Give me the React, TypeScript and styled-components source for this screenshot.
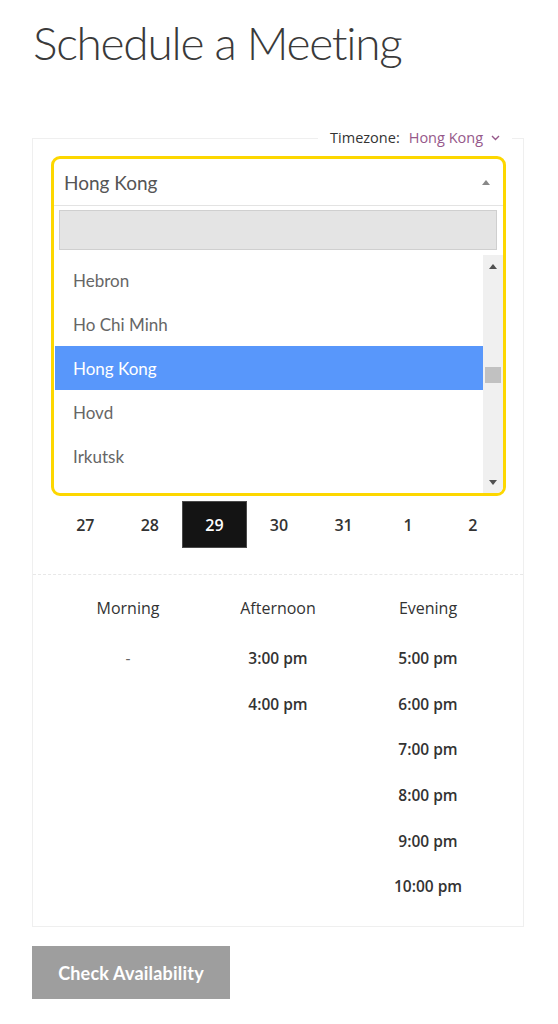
import styled, { createGlobalStyle } from 'styled-components';

const GlobalStyle = createGlobalStyle`
	body {
		margin: 0;
		background: #ffffff;
		font-family: 'Open Sans', 'Noto Sans', sans-serif;
		color: #333333;
	}
`;

const zones = ['Hebron', 'Ho Chi Minh', 'Hong Kong', 'Hovd', 'Irkutsk'];
const days = [27, 28, 29, 30, 31, 1, 2];
const slots = [
	{ title: 'Morning', times: [] as string[] },
	{ title: 'Afternoon', times: ['3:00 pm', '4:00 pm'] },
	{ title: 'Evening', times: ['5:00 pm', '6:00 pm', '7:00 pm', '8:00 pm', '9:00 pm', '10:00 pm'] },
];

const Page = styled.main`
	padding: 0 34px 30px 32px;
`;

const Title = styled.h1`
	margin: 0;
	padding: 14px 0 0 1px;
	font-family: Lato, 'Liberation Sans', sans-serif;
	font-weight: 300;
	font-size: 46px;
	line-height: 58px;
	letter-spacing: -1.25px;
	color: #3a3a3a;
`;

const Panel = styled.section`
	position: relative;
	margin-top: 66px;
	border: 1px solid #efefef;
`;

const TimezoneLabel = styled.div`
	position: absolute;
	top: -11px;
	right: 11px;
	display: flex;
	align-items: center;
	gap: 9px;
	padding: 0 12px;
	background: #ffffff;
	font-size: 14.5px;
	line-height: 20px;
	color: #333333;
`;

const ZoneLink = styled.span`
	display: flex;
	align-items: center;
	gap: 8px;
	color: #96588a;
`;

const Calendar = styled.div`
	padding: 17px 17px 26px 18px;
	border-bottom: 1px dashed #e8e8e8;
`;

const Dropdown = styled.div`
	border: 3px solid #fdd700;
	border-radius: 9px;
	overflow: hidden;
	background: #ffffff;
`;

const SelectHead = styled.div`
	display: flex;
	align-items: center;
	justify-content: space-between;
	height: 46px;
	padding: 0 13px 0 10px;
	border-bottom: 1px solid #e3e3e3;
	font-family: Lato, 'Liberation Sans', sans-serif;
	font-size: 19px;
	color: #555555;
`;

const Caret = styled.span<{ $dir: 'up' | 'down'; $color: string }>`
	width: 0;
	height: 0;
	border-left: 4px solid transparent;
	border-right: 4px solid transparent;
	${(p) =>
		p.$dir === 'up'
			? `border-bottom: 5px solid ${p.$color};`
			: `border-top: 5px solid ${p.$color};`}
`;

const SearchWrap = styled.div`
	padding: 4px 6px 5px 5px;
`;

const Search = styled.div`
	height: 38px;
	background: #e4e4e4;
	border: 1px solid #cfcfcf;
`;

const ListArea = styled.div`
	display: flex;
	height: 238px;
	overflow: hidden;
`;

const Options = styled.ul`
	flex: 1;
	margin: 0;
	padding: 3px 0 0 1px;
	list-style: none;
`;

const Option = styled.li<{ $active?: boolean }>`
	display: flex;
	align-items: center;
	height: 44px;
	padding-left: 18px;
	font-family: Lato, 'Liberation Sans', sans-serif;
	font-size: 17px;
	color: ${(p) => (p.$active ? '#ffffff' : '#666666')};
	background: ${(p) => (p.$active ? '#5897fb' : 'transparent')};
`;

const Track = styled.div`
	display: flex;
	flex-direction: column;
	align-items: center;
	width: 20px;
	padding: 9px 0 8px;
	background: #f0f0f0;
`;

const Thumb = styled.div`
	width: 16px;
	height: 16px;
	margin-top: 98px;
	background: #c1c1c1;
`;

const Spacer = styled.div`
	flex: 1;
`;

const Days = styled.div`
	display: grid;
	grid-template-columns: repeat(7, 1fr);
	margin: 5px 1px 0 2px;
`;

const Day = styled.div<{ $selected?: boolean }>`
	display: flex;
	align-items: center;
	justify-content: center;
	height: 45px;
	font-size: 16px;
	font-weight: 600;
	color: ${(p) => (p.$selected ? '#ffffff' : '#333333')};
	background: ${(p) => (p.$selected ? '#141414' : 'transparent')};
	border: 1px solid ${(p) => (p.$selected ? '#4a4a4a' : 'transparent')};
`;

const Slots = styled.div`
	display: grid;
	grid-template-columns: repeat(3, 1fr);
	padding: 21px 20px 17px;
`;

const SlotColumn = styled.div`
	display: flex;
	flex-direction: column;
	align-items: center;
`;

const SlotTitle = styled.div`
	height: 24px;
	margin-bottom: 15px;
	font-size: 16px;
	line-height: 24px;
	color: #333333;
`;

const SlotTime = styled.div<{ $empty?: boolean }>`
	display: flex;
	align-items: center;
	height: 45.7px;
	font-size: 15.5px;
	font-weight: ${(p) => (p.$empty ? 400 : 600)};
	color: ${(p) => (p.$empty ? '#666666' : '#333333')};
`;

const CheckButton = styled.button`
	display: block;
	width: 198px;
	height: 53px;
	margin-top: 19px;
	border: 0;
	background: #9e9e9e;
	color: #ffffff;
	font-family: Lato, 'Liberation Sans', sans-serif;
	font-size: 18px;
	font-weight: 700;
	letter-spacing: 0.2px;
	cursor: pointer;
`;

const Chevron = () => (
	<svg width='9' height='6' viewBox='0 0 9 6' fill='none'>
		<path d='M1 1l3.5 3.5L8 1' stroke='#96588a' strokeWidth='1.4' />
	</svg>
);

const App = () => {
	return (
		<Page>
			<GlobalStyle />
			<Title>Schedule a Meeting</Title>
			<Panel>
				<TimezoneLabel>
					<span>Timezone:</span>
					<ZoneLink>
						Hong Kong
						<Chevron />
					</ZoneLink>
				</TimezoneLabel>
				<Calendar>
					<Dropdown>
						<SelectHead>
							Hong Kong
							<Caret $dir='up' $color='#888888' />
						</SelectHead>
						<SearchWrap>
							<Search />
						</SearchWrap>
						<ListArea>
							<Options>
								{zones.map((zone) => (
									<Option key={zone} $active={zone === 'Hong Kong'}>
										{zone}
									</Option>
								))}
							</Options>
							<Track>
								<Caret $dir='up' $color='#505050' />
								<Thumb />
								<Spacer />
								<Caret $dir='down' $color='#505050' />
							</Track>
						</ListArea>
					</Dropdown>
					<Days>
						{days.map((day) => (
							<Day key={day} $selected={day === 29}>
								{day}
							</Day>
						))}
					</Days>
				</Calendar>
				<Slots>
					{slots.map((slot) => (
						<SlotColumn key={slot.title}>
							<SlotTitle>{slot.title}</SlotTitle>
							{slot.times.length === 0 ? (
								<SlotTime $empty>-</SlotTime>
							) : (
								slot.times.map((time) => <SlotTime key={time}>{time}</SlotTime>)
							)}
						</SlotColumn>
					))}
				</Slots>
			</Panel>
			<CheckButton>Check Availability</CheckButton>
		</Page>
	);
};

export default App;
